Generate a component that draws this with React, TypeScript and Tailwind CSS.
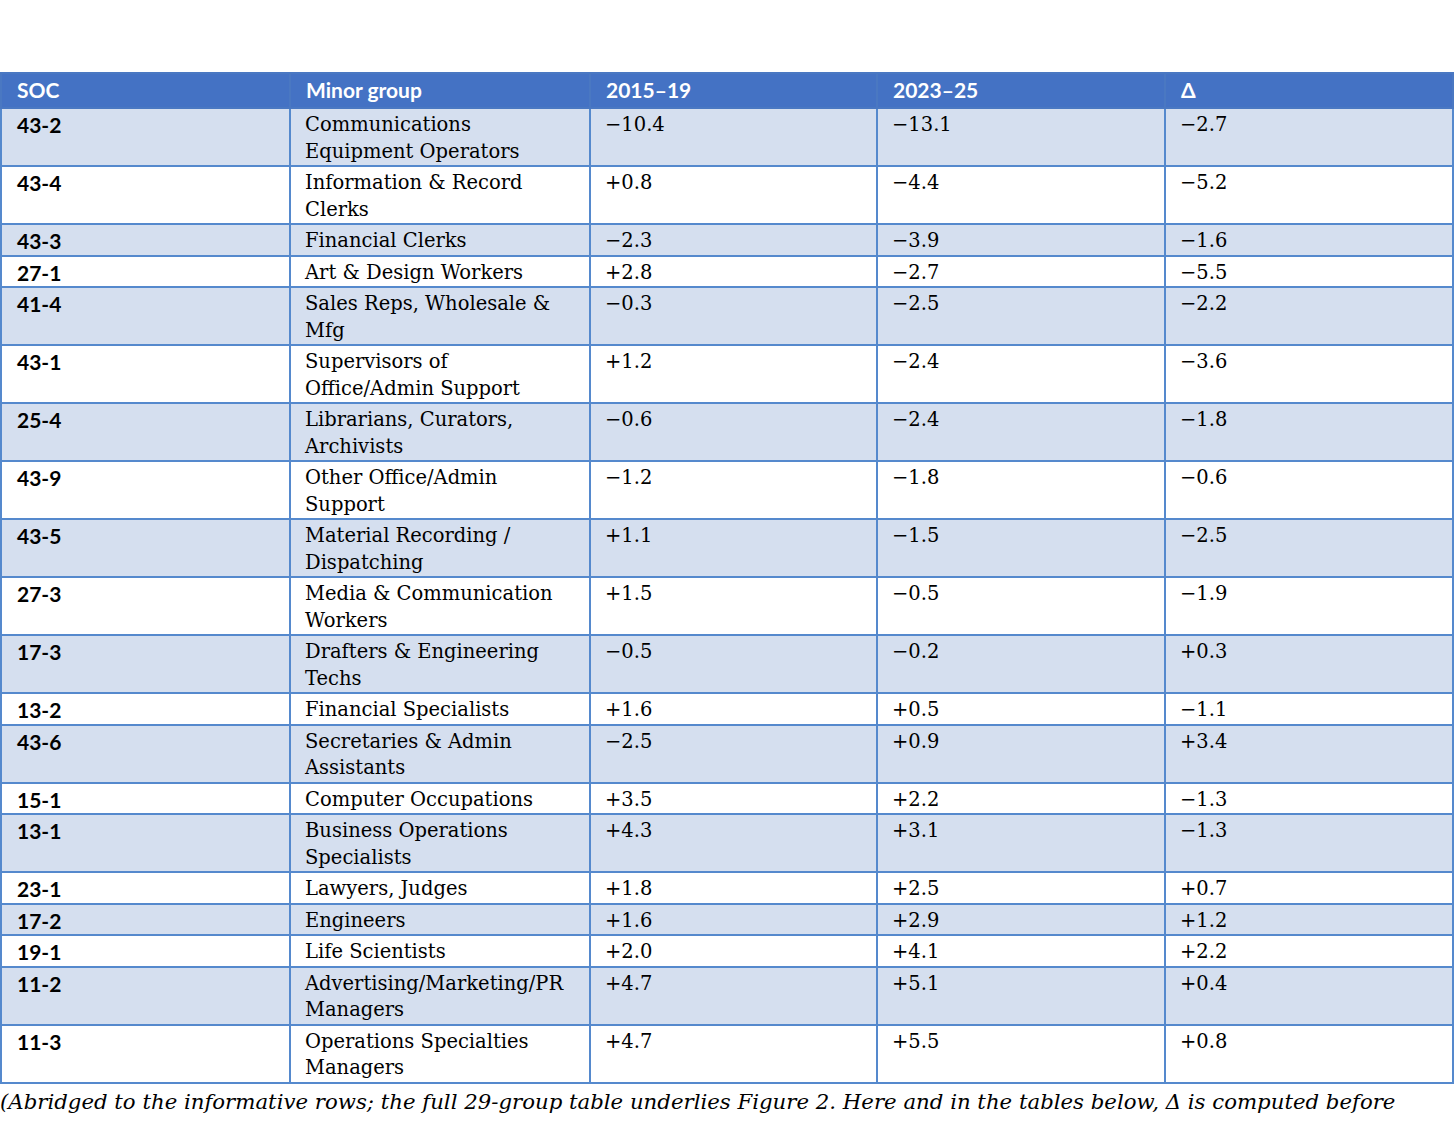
import React from "react";

type Row = { soc: string; group: string[]; a: string; b: string; d: string };

const rows: Row[] = [
  { soc: "43-2", group: ["Communications", "Equipment Operators"], a: "−10.4", b: "−13.1", d: "−2.7" },
  { soc: "43-4", group: ["Information & Record", "Clerks"], a: "+0.8", b: "−4.4", d: "−5.2" },
  { soc: "43-3", group: ["Financial Clerks"], a: "−2.3", b: "−3.9", d: "−1.6" },
  { soc: "27-1", group: ["Art & Design Workers"], a: "+2.8", b: "−2.7", d: "−5.5" },
  { soc: "41-4", group: ["Sales Reps, Wholesale &", "Mfg"], a: "−0.3", b: "−2.5", d: "−2.2" },
  { soc: "43-1", group: ["Supervisors of", "Office/Admin Support"], a: "+1.2", b: "−2.4", d: "−3.6" },
  { soc: "25-4", group: ["Librarians, Curators,", "Archivists"], a: "−0.6", b: "−2.4", d: "−1.8" },
  { soc: "43-9", group: ["Other Office/Admin", "Support"], a: "−1.2", b: "−1.8", d: "−0.6" },
  { soc: "43-5", group: ["Material Recording /", "Dispatching"], a: "+1.1", b: "−1.5", d: "−2.5" },
  { soc: "27-3", group: ["Media & Communication", "Workers"], a: "+1.5", b: "−0.5", d: "−1.9" },
  { soc: "17-3", group: ["Drafters & Engineering", "Techs"], a: "−0.5", b: "−0.2", d: "+0.3" },
  { soc: "13-2", group: ["Financial Specialists"], a: "+1.6", b: "+0.5", d: "−1.1" },
  { soc: "43-6", group: ["Secretaries & Admin", "Assistants"], a: "−2.5", b: "+0.9", d: "+3.4" },
  { soc: "15-1", group: ["Computer Occupations"], a: "+3.5", b: "+2.2", d: "−1.3" },
  { soc: "13-1", group: ["Business Operations", "Specialists"], a: "+4.3", b: "+3.1", d: "−1.3" },
  { soc: "23-1", group: ["Lawyers, Judges"], a: "+1.8", b: "+2.5", d: "+0.7" },
  { soc: "17-2", group: ["Engineers"], a: "+1.6", b: "+2.9", d: "+1.2" },
  { soc: "19-1", group: ["Life Scientists"], a: "+2.0", b: "+4.1", d: "+2.2" },
  { soc: "11-2", group: ["Advertising/Marketing/PR", "Managers"], a: "+4.7", b: "+5.1", d: "+0.4" },
  { soc: "11-3", group: ["Operations Specialties", "Managers"], a: "+4.7", b: "+5.5", d: "+0.8" },
];

const headers = ["SOC", "Minor group", "2015–19", "2023–25", "Δ"];

const sans = "font-['Lato','Liberation_Sans',sans-serif]";
const serif = "font-['DejaVu_Serif','Liberation_Serif',serif]";

export default function App() {
  return (
    <div className="min-h-[1148px] w-[1456px] bg-white pt-[72px]">
      <table className="w-[1452px] table-fixed border-collapse">
        <colgroup>
          <col className="w-[289px]" />
          <col className="w-[300px]" />
          <col className="w-[287px]" />
          <col className="w-[288px]" />
          <col className="w-[288px]" />
        </colgroup>
        <thead>
          <tr className="bg-[#4472c4]">
            {headers.map((h) => (
              <th
                key={h}
                className={`${sans} border-2 border-[#4a78c2] px-[15px] pt-[2px] pb-[4px] text-left align-top text-[21px] font-bold leading-[27px] text-white`}
              >
                {h}
              </th>
            ))}
          </tr>
        </thead>
        <tbody>
          {rows.map((r, i) => (
            <tr key={r.soc} className={i % 2 === 0 ? "bg-[#d5dfef]" : "bg-white"}>
              <td className={`${sans} border-2 border-[#5589cd] px-[15px] pt-[3px] pb-0 align-top text-[21px] font-bold leading-[26.5px] text-black`}>
                {r.soc}
              </td>
              <td className={`${serif} border-2 border-[#5589cd] px-[14px] pt-[3px] pb-0 align-top text-[19.5px] leading-[26.5px] text-black`}>
                {r.group.map((g, j) => (
                  <div key={j} className="whitespace-nowrap">{g}</div>
                ))}
              </td>
              {[r.a, r.b, r.d].map((v, j) => (
                <td
                  key={j}
                  className={`${serif} border-2 border-[#5589cd] px-[14px] pt-[3px] pb-0 align-top text-[19.5px] leading-[26.5px] text-black`}
                >
                  {v}
                </td>
              ))}
            </tr>
          ))}
        </tbody>
      </table>
      <p className={`${serif} whitespace-nowrap pt-[4px] text-[21.25px] italic leading-[27px] text-black`}>
        (Abridged to the informative rows; the full 29-group table underlies Figure 2. Here and in the tables below, Δ is computed before
      </p>
    </div>
  );
}
